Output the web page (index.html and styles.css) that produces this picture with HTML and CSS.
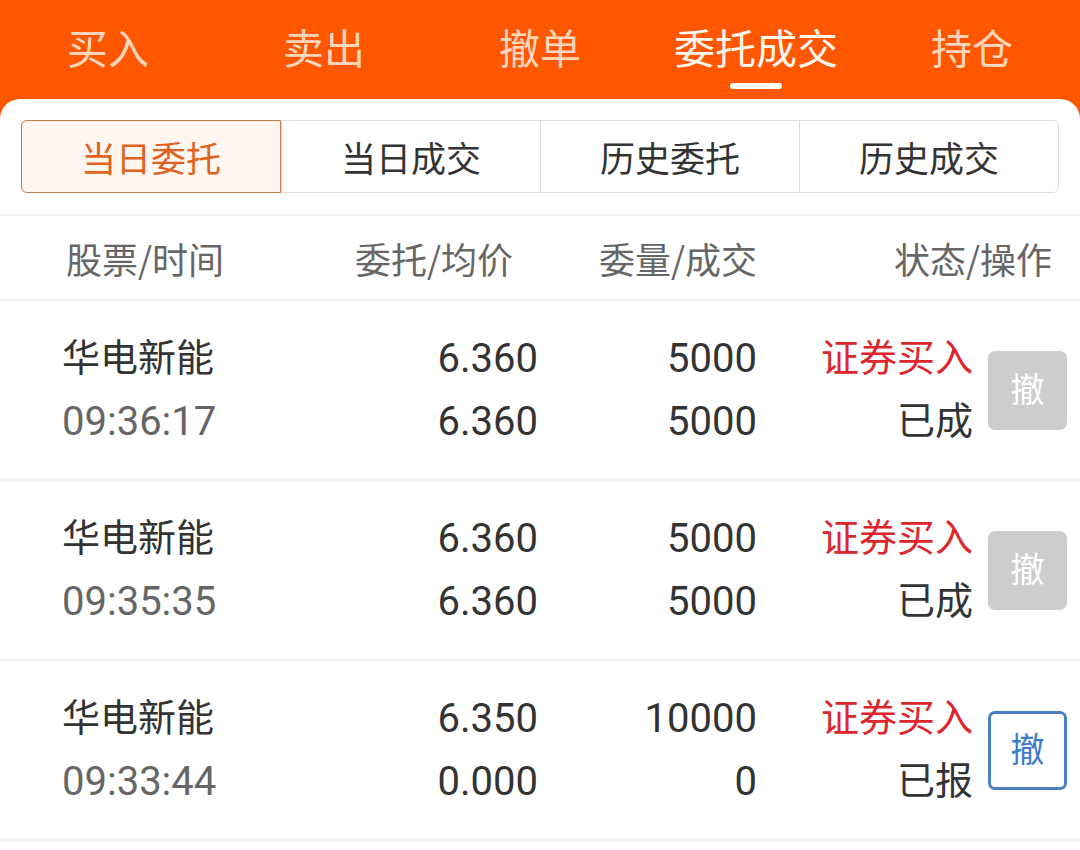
FILE: index.html
```html
<!DOCTYPE html>
<html lang="zh-CN">
<head>
  <meta charset="UTF-8">
  <meta name="viewport" content="width=device-width, initial-scale=1.0">
  <title>委托成交</title>
  <link rel="stylesheet" href="styles.css">
</head>
<body>
  <div class="app">
    <!-- 顶部交易标签 -->
    <div class="tabs">
      <div class="tab">买入</div>
      <div class="tab">卖出</div>
      <div class="tab">撤单</div>
      <div class="tab active">委托成交<span class="bar"></span></div>
      <div class="tab">持仓</div>
    </div>

    <div class="panel">
      <div class="seg-wrap">
        <div class="seg">
          <div class="seg-item active">当日委托</div>
          <div class="seg-item">当日成交</div>
          <div class="seg-item">历史委托</div>
          <div class="seg-item">历史成交</div>
        </div>
      </div>

      <div class="head">
        <div>股票/时间</div>
        <div class="r">委托/均价</div>
        <div class="r">委量/成交</div>
        <div class="r">状态/操作</div>
      </div>

      <div class="row">
        <div class="cell">
          <div class="name">华电新能</div>
          <div class="num time">09:36:17</div>
        </div>
        <div class="cell r num"><div>6.360</div><div>6.360</div></div>
        <div class="cell r num"><div>5000</div><div>5000</div></div>
        <div class="cell r"><div class="buy">证券买入</div><div>已成</div></div>
        <div class="btn disabled">撤</div>
      </div>

      <div class="row">
        <div class="cell">
          <div class="name">华电新能</div>
          <div class="num time">09:35:35</div>
        </div>
        <div class="cell r num"><div>6.360</div><div>6.360</div></div>
        <div class="cell r num"><div>5000</div><div>5000</div></div>
        <div class="cell r"><div class="buy">证券买入</div><div>已成</div></div>
        <div class="btn disabled">撤</div>
      </div>

      <div class="row">
        <div class="cell">
          <div class="name">华电新能</div>
          <div class="num time">09:33:44</div>
        </div>
        <div class="cell r num"><div>6.350</div><div>0.000</div></div>
        <div class="cell r num"><div>10000</div><div>0</div></div>
        <div class="cell r"><div class="buy">证券买入</div><div>已报</div></div>
        <div class="btn">撤</div>
      </div>
    </div>
  </div>
</body>
</html>
```

FILE: styles.css
```css
body {
  margin: 0;
  font-family: Roboto, "Noto Sans CJK SC", sans-serif;
  color: #333;
}

.app {
  background-color: #ff5600;
  height: 850px;
  overflow: hidden;
}

/* 顶部标签 */
.tabs {
  display: grid;
  grid-template-columns: repeat(5, 1fr);
  height: 99px;
}

.tab {
  display: flex;
  flex-direction: column;
  align-items: center;
  padding-top: 24px;
  font-size: 41px;
  line-height: 52px;
  color: #fdd6bd;
}

.tab.active {
  color: #fff7f0;
}

.tab .bar {
  display: block;
  width: 52px;
  height: 6px;
  margin-top: 7px;
  border-radius: 3px;
  background-color: #fff;
}

.panel {
  background-color: #fff;
  border-radius: 20px 20px 0 0;
  height: 751px;
}

/* 分段选择 */
.seg-wrap {
  padding: 21px;
}

.seg {
  display: grid;
  grid-template-columns: repeat(4, 1fr);
  height: 73px;
  border: 1px solid #dcdcdc;
  border-radius: 6px;
  box-sizing: border-box;
}

.seg-item {
  display: flex;
  align-items: center;
  justify-content: center;
  font-size: 35px;
  color: #333;
  border-left: 1px solid #dcdcdc;
}

.seg-item:first-child {
  border-left: none;
}

.seg-item.active {
  margin: -1px 0 -1px -1px;
  border: 1px solid #c97a42;
  border-radius: 6px 0 0 6px;
  background-color: #fff6f0;
  color: #e0621e;
}

/* 表头 */
.head {
  display: grid;
  grid-template-columns: 234px 213px 244px 1fr;
  align-items: center;
  height: 83px;
  padding: 0 28px 0 66px;
  border-top: 2px solid #f3f3f3;
  border-bottom: 2px solid #f0f0f0;
  font-family: "Noto Sans CJK SC", sans-serif;
  font-size: 36px;
  color: #666;
}

.r {
  text-align: right;
}

/* 委托列表 */
.row {
  display: grid;
  grid-template-columns: 300px 176px 219px 216px 79px;
  align-items: center;
  height: 178px;
  padding-left: 62px;
  border-bottom: 2px solid #f0f0f0;
  font-size: 38px;
  line-height: 63px;
}

.num {
  font-size: 40px;
}

.time {
  color: #666;
}

.buy {
  color: #dc262c;
}

.btn {
  width: 79px;
  height: 79px;
  margin-left: 15px;
  box-sizing: border-box;
  display: flex;
  align-items: center;
  justify-content: center;
  border: 3px solid #4a80c2;
  border-radius: 7px;
  font-size: 34px;
  line-height: 1;
  color: #3b7cc8;
  background-color: #fff;
}

.btn.disabled {
  border-color: #cdcdcd;
  background-color: #cdcdcd;
  color: #fff;
}
```
